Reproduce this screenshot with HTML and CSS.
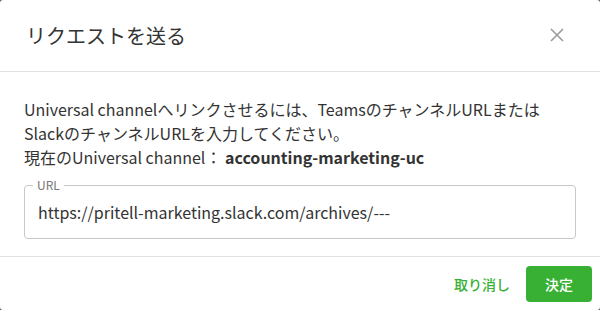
FILE: index.html
```html
<!DOCTYPE html>
<html lang="ja">
<head>
  <meta charset="UTF-8">
  <title>リクエストを送る</title>
  <link rel="stylesheet" href="styles.css">
</head>
<body>
  <div class="dialog">
    <div class="dialog-header">
      <h2>リクエストを送る</h2>
      <button class="close-btn" aria-label="閉じる">
        <svg width="14" height="14" viewBox="0 0 14 14">
          <path d="M1 1L13 13M13 1L1 13" stroke="#9a9a9a" stroke-width="1.6" fill="none"/>
        </svg>
      </button>
    </div>

    <div class="dialog-body">
      <p>Universal channelへリンクさせるには、TeamsのチャンネルURLまたは<br>SlackのチャンネルURLを入力してください。<br>現在のUniversal channel： <b>accounting-marketing-uc</b></p>

      <fieldset class="url-field">
        <legend>URL</legend>
        <input type="text" name="url" value="https://pritell-marketing.slack.com/archives/---">
      </fieldset>
    </div>

    <div class="dialog-footer">
      <button class="cancel-btn">取り消し</button>
      <button class="ok-btn">決定</button>
    </div>
  </div>
</body>
</html>
```

FILE: styles.css
```css
body {
  margin: 0;
  background-color: #555;
  font-family: "Noto Sans CJK JP", "Noto Sans", sans-serif;
  color: #333;
}
.dialog {
  width: 600px;
  height: 310px;
  background: white;
  border-radius: 3px;
  overflow: hidden;
  display: flex;
  flex-direction: column;
}
.dialog-header {
  height: 72px;
  box-sizing: border-box;
  border-bottom: 1px solid #e2e2e2;
  padding: 0 24px 0 26px;
  display: flex;
  align-items: center;
  justify-content: space-between;
}
.dialog-header h2 {
  margin: 0;
  font-size: 20px;
  font-weight: normal;
  color: #333;
}
.close-btn {
  border: none;
  background: none;
  padding: 0;
  margin: 0 12px 1px 0;
  display: flex;
  cursor: pointer;
}
.dialog-body {
  flex: 1;
  padding: 25px 24px 0;
  border-bottom: 1px solid #e2e2e2;
}
.dialog-body p {
  margin: 0;
  font-size: 16px;
  line-height: 24px;
}
.dialog-body b {
  font-weight: bold;
}
.url-field {
  margin: 8px 0 0;
  padding: 0 0 7px;
  border: 1px solid #c8c8c8;
  border-radius: 4px;
}
.url-field legend {
  margin-left: 8px;
  padding: 0 4px;
  font-size: 12px;
  line-height: 16px;
  color: #777;
}
.url-field input {
  width: 100%;
  height: 38px;
  box-sizing: border-box;
  border: none;
  outline: none;
  padding: 0 13px;
  font-family: inherit;
  font-size: 16px;
  color: #333;
  background: transparent;
}
.dialog-footer {
  height: 53px;
  padding: 0 8px;
  display: flex;
  align-items: center;
  justify-content: flex-end;
}
.cancel-btn {
  border: none;
  background: none;
  padding: 0 16px;
  font-family: inherit;
  font-size: 14px;
  font-weight: 500;
  color: #37b034;
  cursor: pointer;
}
.ok-btn {
  width: 66px;
  height: 36px;
  border: none;
  border-radius: 4px;
  background-color: #37b034;
  color: white;
  font-family: inherit;
  font-size: 14px;
  font-weight: 500;
  cursor: pointer;
}
```
